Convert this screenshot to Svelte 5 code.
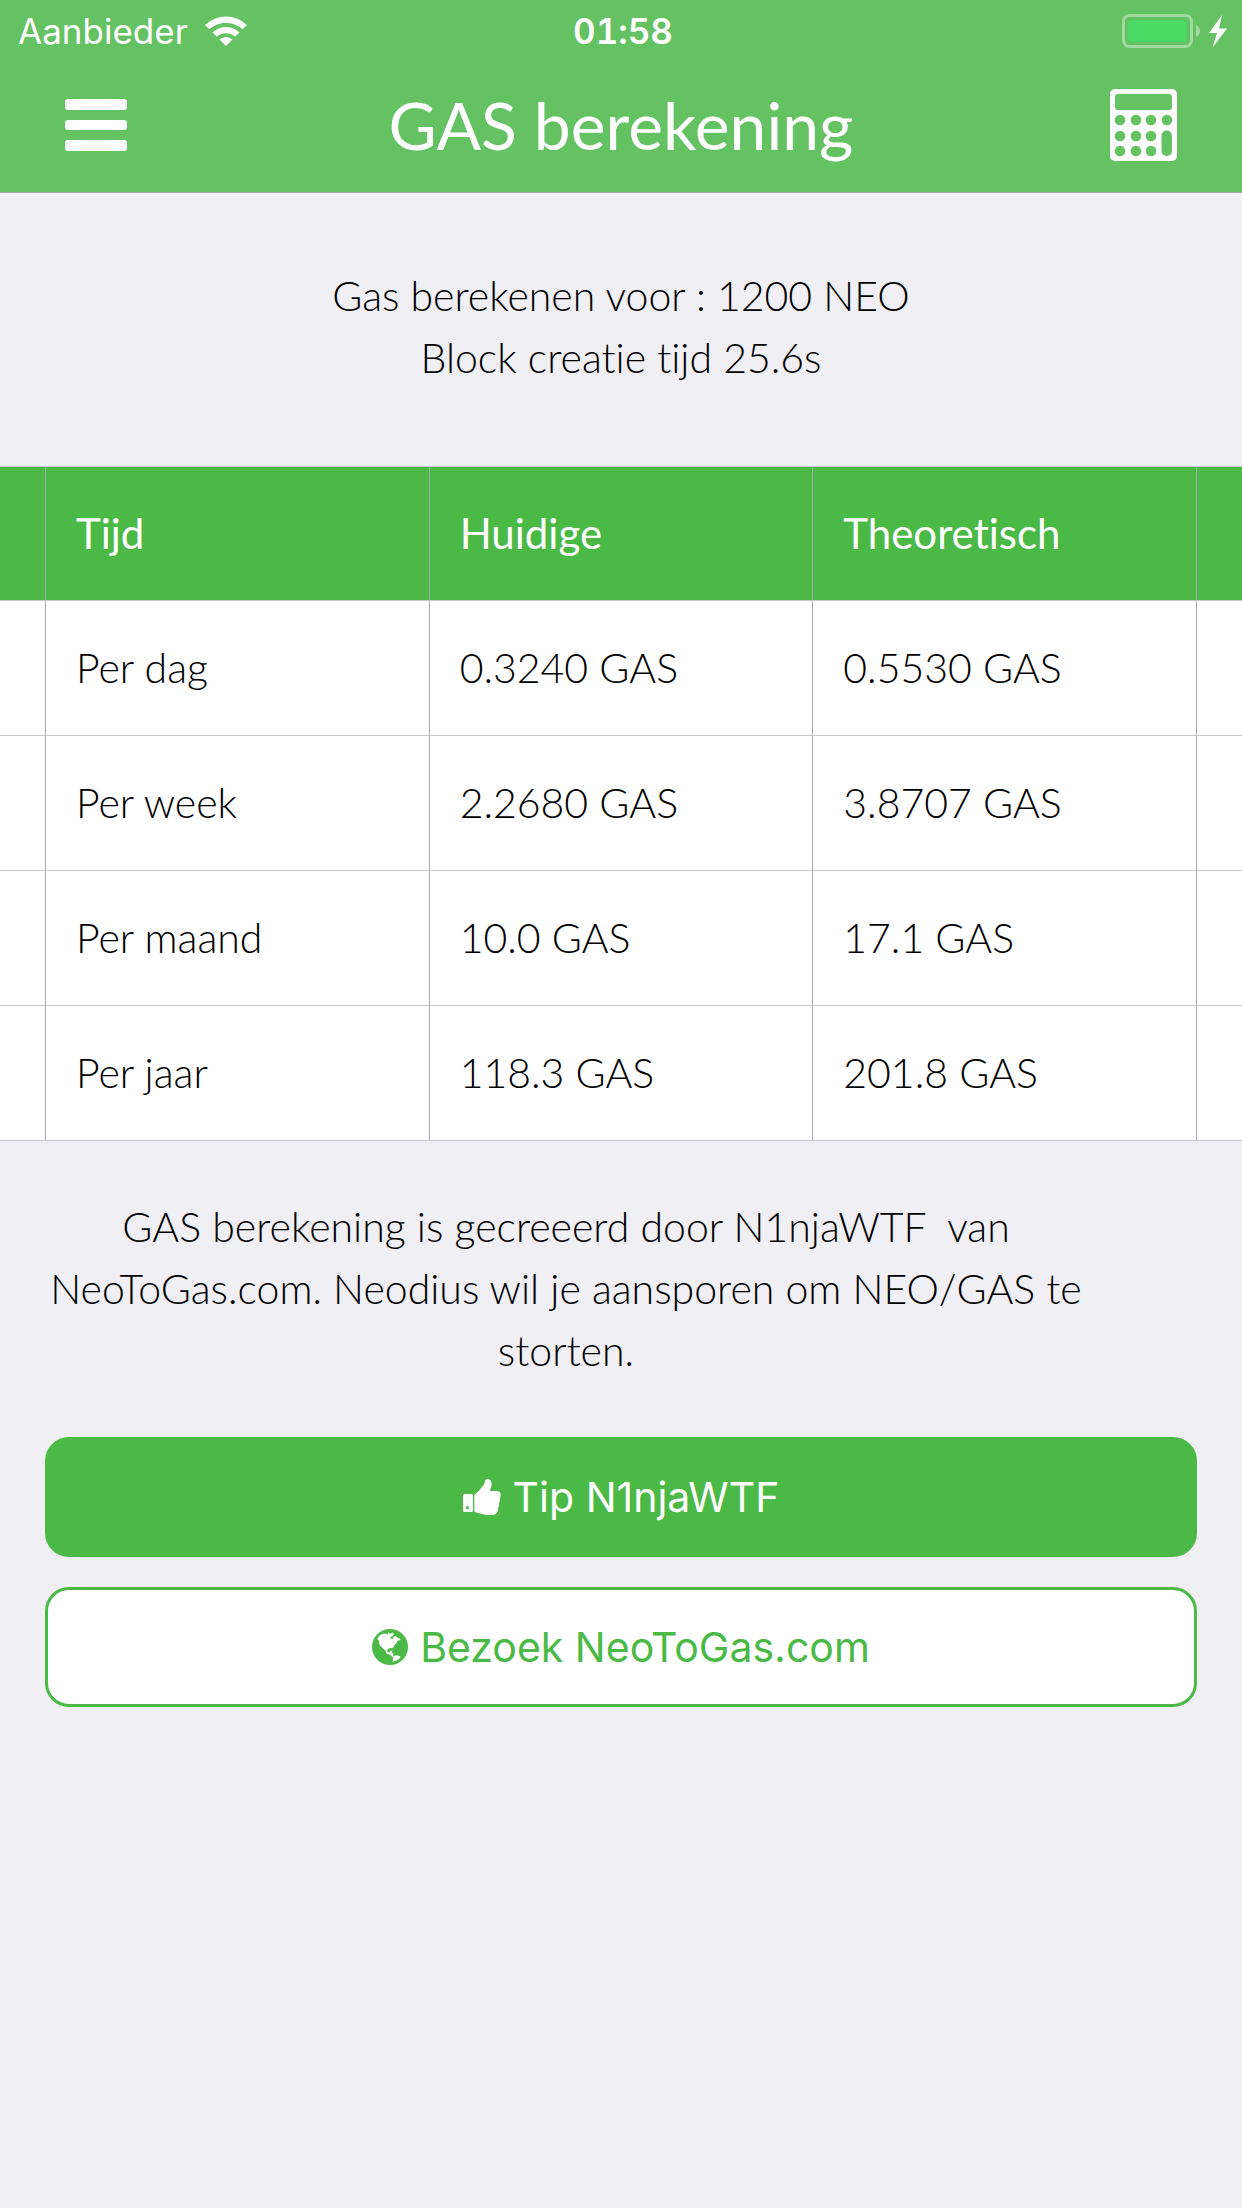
<script>
  const rows = [
    ['Per dag', '0.3240 GAS', '0.5530 GAS'],
    ['Per week', '2.2680 GAS', '3.8707 GAS'],
    ['Per maand', '10.0 GAS', '17.1 GAS'],
    ['Per jaar', '118.3 GAS', '201.8 GAS']
  ];
  const keys = [
    [10, 31], [26, 31], [41, 31], [57, 31],
    [10, 47], [26, 47], [41, 47],
    [10, 62], [26, 62], [41, 62]
  ];
</script>

<div class="page">
  <header>
    <div class="status">
      <div class="carrier">
        <span>Aanbieder</span>
        <svg class="wifi" viewBox="0 0 42 30" aria-hidden="true">
          <path d="M0 9 A30 30 0 0 1 42 9 L37.500 13.300 A24 24 0 0 0 4.500 13.300 Z M7.500 16.500 A19.500 19.500 0 0 1 34.500 16.500 L30 20.800 A13.500 13.500 0 0 0 12 20.800 Z M14.500 23.500 A9.500 9.500 0 0 1 27.500 23.500 L21 30 Z" fill="#fff" />
        </svg>
      </div>
      <span class="clock">01:58</span>
      <svg class="battery" viewBox="0 0 106 34" aria-hidden="true">
        <rect x="1.500" y="1.500" width="68" height="31" rx="6" fill="none" stroke="#fff" stroke-opacity=".4" stroke-width="3" />
        <rect x="6" y="6" width="59" height="22" rx="3" fill="#4cd964" />
        <path d="M74 11 Q78 13 78 17 Q78 21 74 23 Z" fill="#fff" fill-opacity=".4" />
        <path d="M100 1 L87 19 L95 19 L90.500 33.500 L105 14.500 L97 14.500 Z" fill="#fff" />
      </svg>
    </div>
    <div class="bar">
      <button class="icon" aria-label="Menu">
        <svg width="62" height="52" viewBox="0 0 62 52">
          <rect width="62" height="11" rx="3" fill="#fff" />
          <rect y="21" width="62" height="10" rx="3" fill="#fff" />
          <rect y="41" width="62" height="11" rx="3" fill="#fff" />
        </svg>
      </button>
      <h1>GAS berekening</h1>
      <button class="icon calculator" aria-label="Rekenmachine">
        <svg width="67" height="72" viewBox="0 0 67 72">
          <rect width="67" height="72" rx="5" fill="#fff" />
          <g class="cut">
            <rect x="5" y="5" width="57" height="16" rx="3" />
            {#each keys as [x, y]}
              <circle cx={x} cy={y} r="5.300" />
            {/each}
            <rect x="51.500" y="41.500" width="10.500" height="25.500" rx="5" />
          </g>
        </svg>
      </button>
    </div>
  </header>

  <main>
    <p class="summary">Gas berekenen voor : 1200 NEO<br />Block creatie tijd 25.6s</p>

    <table>
      <colgroup>
        <col class="edge-start" />
        <col />
        <col />
        <col />
        <col class="edge-end" />
      </colgroup>
      <thead>
        <tr>
          <td class="edge"></td>
          <th>Tijd</th>
          <th>Huidige</th>
          <th>Theoretisch</th>
          <td class="edge"></td>
        </tr>
      </thead>
      <tbody>
        {#each rows as row}
          <tr>
            <td class="edge"></td>
            {#each row as cell}
              <td>{cell}</td>
            {/each}
            <td class="edge"></td>
          </tr>
        {/each}
      </tbody>
    </table>

    <p class="credit">GAS berekening is gecreeerd door N1njaWTF &nbsp;van NeoToGas.com. Neodius wil je aansporen om NEO/GAS te storten.</p>

    <div class="actions">
      <button class="action primary">
        <svg width="38" height="36" viewBox="0 0 38 36" aria-hidden="true">
          <path fill-rule="evenodd" d="M1.500 15 H8.500 Q10 15 10 16.500 V31.500 Q10 33 8.500 33 H1.500 Q0 33 0 31.500 V16.500 Q0 15 1.500 15 Z M4.500 27 A1.600 1.600 0 1 0 4.500 30.200 A1.600 1.600 0 1 0 4.500 27 Z" fill="#fff" />
          <path d="M11.300 16.500 Q11.300 15.500 12.300 15 C15 13.500 17.500 9.500 20 7 C22 5 21.500 1 23.500 .2 C26 -.4 28.700 1.500 28.700 5 C28.700 8 27 9.500 27 12 H34 C36.500 12 38 14 37.700 16.500 C37.500 18 37.200 18.500 36.700 19.500 C37.200 21 37 22.500 36 24 C36.300 26 36 27.500 35 29 C35 33 33.500 36 29 36 H26 C20.500 36 16 34 12.300 33.300 Q11.300 33 11.300 32 Z" fill="#fff" />
        </svg>
        <span>Tip N1njaWTF</span>
      </button>
      <button class="action outline">
        <svg width="36" height="36" viewBox="0 0 36 36" aria-hidden="true">
          <circle cx="18" cy="18" r="18" fill="#4bb946" />
          <path d="M5.300 10 L7.500 6.500 L10 5 L13 4.500 L15.500 5.500 L16.500 3 L17.300 4.500 L19 4.500 L20.500 3.500 L22 5 L21 6.500 L18.500 8 L18.500 9.500 L20.500 10 L21.500 8 L23.500 7 L25.500 8.500 L28.500 10 L28 11 L25.500 12 L25 13.500 L22.500 16 L21.500 18.500 L20 19 L16.500 19.500 L15.300 21 L15.500 23 L17.500 23.500 L18.500 22 L20.500 21.500 L19.500 24 L21.500 24.500 L21 26.500 L22.500 27.500 L20.500 28 L18.500 26 L14.500 24.500 L13.500 21.500 L11.500 20 L8.500 17 L7 14.500 L7 12 Z M21.500 27 L25 26.300 L28.700 27.500 L27.500 29.500 L24.500 31.500 L20.500 32.800 Z" fill="#fff" />
        </svg>
        <span>Bezoek NeoToGas.com</span>
      </button>
    </div>
  </main>
</div>

<style>
  :global(body) {
    margin: 0;
    background: #efeff4;
  }

  .page {
    min-height: 100vh;
    background: #efeff4;
    color: #000;
    font-family: Lato, sans-serif;
    font-size: 41px;
    font-weight: 300;
    font-variant-ligatures: none;
    line-height: 62px;
  }

  header {
    padding-bottom: 4px;
    background: #64c263;
    border-bottom: 1px solid #a7a7aa;
    color: #fff;
  }

  .status {
    display: grid;
    grid-template-columns: 1fr auto 1fr;
    align-items: center;
    height: 62px;
    padding: 0 14px 0 18px;
    font-family: Inter, sans-serif;
    font-size: 35px;
    font-weight: 400;
    line-height: 62px;
  }

  .carrier {
    display: flex;
    align-items: center;
    gap: 17px;
  }

  .wifi {
    width: 42px;
    height: 30px;
  }

  .clock {
    font-weight: 600;
    font-variant-numeric: tabular-nums;
  }

  .battery {
    width: 106px;
    height: 34px;
    justify-self: end;
  }

  .bar {
    display: grid;
    grid-template-columns: 1fr auto 1fr;
    align-items: center;
    height: 126px;
    padding: 0 65px;
  }

  h1 {
    margin: 0;
    font-size: 66px;
    font-weight: 400;
    line-height: 126px;
  }

  .icon {
    display: flex;
    padding: 0;
    border: 0;
    background: none;
  }

  .calculator {
    justify-self: end;
  }

  .cut {
    fill: #64c263;
  }

  .summary {
    margin: 0;
    padding: 72px 45px 77px;
    text-align: center;
  }

  table {
    width: 100%;
    table-layout: fixed;
    border-collapse: separate;
    border-spacing: 0;
    border-top: 1px solid #c8c7cc;
    background: #fff;
  }

  .edge-start {
    width: 45px;
  }

  .edge-end {
    width: 46px;
  }

  th,
  td {
    box-sizing: border-box;
    height: 135px;
    padding: 0 30px;
    border-bottom: 1px solid #c8c7cc;
    border-left: 1px solid #aaa;
    text-align: left;
  }

  thead {
    background: #4bb946;
    color: #fff;
  }

  thead th,
  thead td {
    height: 134px;
    padding-bottom: 2px;
  }

  th {
    font-size: 42px;
    font-weight: 400;
  }

  .edge {
    padding: 0;
  }

  .edge:first-child {
    border-left: 0;
  }

  .credit {
    margin: 0;
    padding: 55px 155px 55px 45px;
    text-align: center;
  }

  .actions {
    display: flex;
    flex-direction: column;
    gap: 30px;
    padding: 0 45px;
  }

  .action {
    display: flex;
    align-items: center;
    justify-content: center;
    gap: 12px;
    box-sizing: border-box;
    height: 120px;
    border: 3px solid #4bb946;
    border-radius: 24px;
    font-family: Inter, sans-serif;
    font-size: 41px;
    font-weight: 400;
  }

  .primary {
    background: #4bb946;
    color: #fff;
  }

  .outline {
    background: #fff;
    color: #4bb946;
  }
</style>
